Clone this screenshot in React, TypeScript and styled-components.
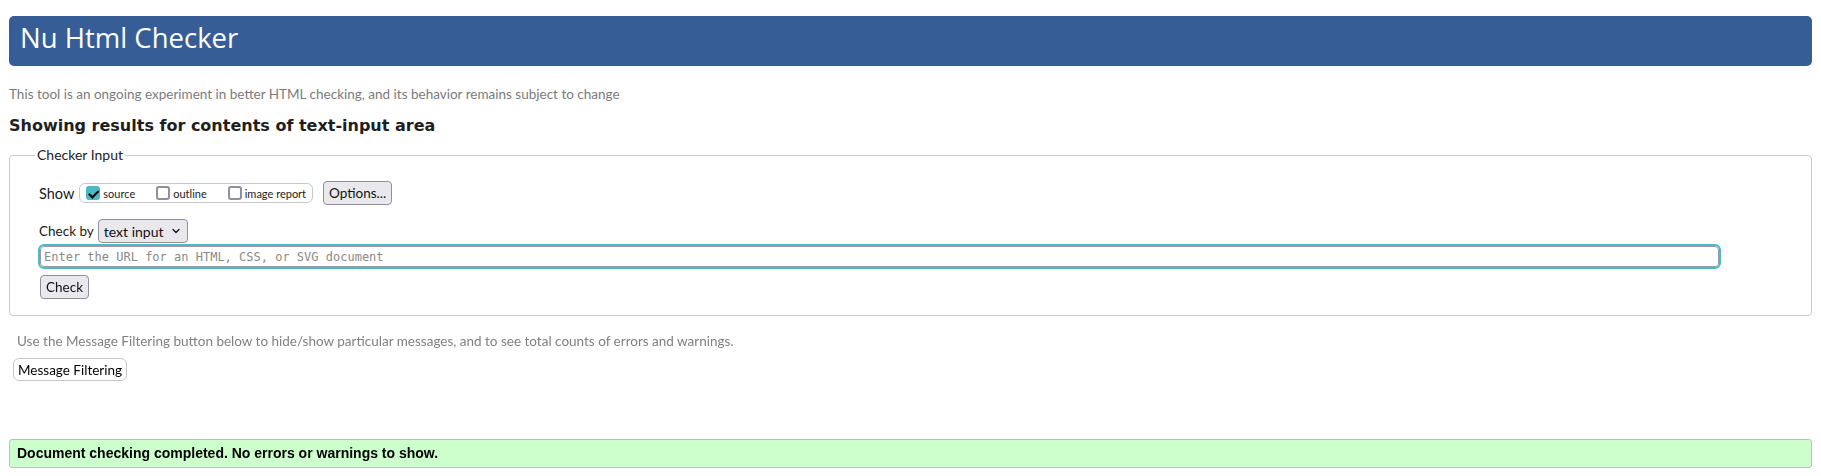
import { ChevronDown } from "lucide-react";
import styled, { createGlobalStyle } from "styled-components";

const GlobalStyle = createGlobalStyle`
  html, body {
    margin: 0;
    padding: 0;
    background: #fff;
  }
  body {
    font-family: Lato, "Open Sans", sans-serif;
    color: #1a1a1a;
  }
`;

export default function App() {
  return (
    <>
      <GlobalStyle />
      <Page>
        <Title>Nu Html Checker</Title>
        <Tagline>
          This tool is an ongoing experiment in better HTML checking, and its
          behavior remains subject to change
        </Tagline>
        <ResultsHeading>Showing results for contents of text-input area</ResultsHeading>

        <Fieldset>
          <Legend>Checker Input</Legend>
          <Row>
            <FieldLabel>Show</FieldLabel>
            <OptionGroup>
              <CheckItem>
                <Checkbox type="checkbox" defaultChecked />
                source
              </CheckItem>
              <CheckItem>
                <Checkbox type="checkbox" />
                outline
              </CheckItem>
              <CheckItem>
                <Checkbox type="checkbox" />
                image report
              </CheckItem>
            </OptionGroup>
            <Button type="button">Options...</Button>
          </Row>

          <Row $gap={4} $top={14}>
            <FieldLabel $size={13.5}>Check by</FieldLabel>
            <SelectWrap>
              <Select defaultValue="text">
                <option value="address">address</option>
                <option value="file">file upload</option>
                <option value="text">text input</option>
              </Select>
              <SelectArrow size={12} strokeWidth={2.6} />
            </SelectWrap>
          </Row>

          <UrlInput
            type="url"
            autoFocus
            placeholder="Enter the URL for an HTML, CSS, or SVG document"
          />

          <Row $top={8}>
            <Button type="submit">Check</Button>
          </Row>
        </Fieldset>

        <Hint>
          Use the Message Filtering button below to hide/show particular
          messages, and to see total counts of errors and warnings.
        </Hint>
        <FilterButton type="button">Message Filtering</FilterButton>

        <SuccessBar>Document checking completed. No errors or warnings to show.</SuccessBar>
      </Page>
    </>
  );
}

const Page = styled.div`
  padding: 16px 9px 8px;
`;

const Title = styled.h1`
  margin: 0;
  height: 50px;
  box-sizing: border-box;
  padding: 0 11px 6px;
  background: #365d95;
  border-radius: 5px;
  color: #fff;
  font-family: "Open Sans", sans-serif;
  font-weight: 400;
  font-size: 27.5px;
  line-height: 44px;
`;

const Tagline = styled.p`
  margin: 19px 0 0;
  font-size: 13.5px;
  line-height: 18px;
  color: #7b7b7b;
`;

const ResultsHeading = styled.h2`
  margin: 13px 0 0;
  font-family: "DejaVu Sans", sans-serif;
  font-weight: 700;
  font-size: 16px;
  line-height: 20px;
  color: #1e1e1e;
`;

const Fieldset = styled.fieldset`
  margin: 9px 0 0;
  padding: 16px 29px 16px 30px;
  border: 1px solid #cbcbcb;
  border-radius: 4px;
  min-width: 0;
`;

const Legend = styled.legend`
  margin-left: -5px;
  padding: 0 2px;
  font-size: 14px;
  line-height: 20px;
  color: #222;
`;

const Row = styled.div<{ $gap?: number; $top?: number }>`
  display: flex;
  align-items: center;
  gap: ${(p) => p.$gap ?? 5}px;
  height: 24px;
  margin-top: ${(p) => p.$top ?? 0}px;
`;

const FieldLabel = styled.span<{ $size?: number }>`
  font-size: ${(p) => p.$size ?? 14.5}px;
  color: #1a1a1a;
  margin-left: -1px;
`;

const OptionGroup = styled.div`
  display: flex;
  align-items: center;
  gap: 21px;
  height: 20px;
  box-sizing: border-box;
  padding: 0 6px;
  margin-right: 5px;
  border: 1px solid #c8c8c8;
  border-radius: 6px;
`;

const CheckItem = styled.label`
  display: flex;
  align-items: center;
  gap: 3px;
  font-size: 11px;
  color: #222;
`;

const Checkbox = styled.input`
  appearance: none;
  position: relative;
  margin: 0;
  width: 14px;
  height: 14px;
  box-sizing: border-box;
  border: 2px solid #8f8f9d;
  border-radius: 3px;
  background: #fff;

  &:checked {
    background: #4bb8c6;
    border-color: #4bb8c6;
  }

  &:checked::after {
    content: "";
    position: absolute;
    left: 2.5px;
    top: -0.5px;
    width: 3.5px;
    height: 7.5px;
    border: solid #000;
    border-width: 0 2.4px 2.4px 0;
    transform: rotate(45deg);
  }
`;

const Button = styled.button`
  height: 24px;
  box-sizing: border-box;
  padding: 0 5px;
  background: #e9e9ed;
  border: 1px solid #8f8f9d;
  border-radius: 4px;
  font-family: Lato, sans-serif;
  font-size: 13.5px;
  color: #111;
`;

const SelectWrap = styled.div`
  position: relative;
  display: flex;
`;

const Select = styled.select`
  appearance: none;
  width: 90px;
  height: 24px;
  box-sizing: border-box;
  padding: 0 20px 0 5px;
  background: #e9e9ed;
  border: 1px solid #8f8f9d;
  border-radius: 4px;
  font-family: Lato, sans-serif;
  font-size: 14px;
  color: #111;
`;

const SelectArrow = styled(ChevronDown)`
  position: absolute;
  right: 6px;
  top: 6px;
  color: #111;
  pointer-events: none;
`;

const UrlInput = styled.input`
  display: block;
  width: calc(100% - 63px);
  height: 21px;
  box-sizing: border-box;
  margin: 3px 0 0;
  padding: 0 3px;
  border: 1px solid #9a9aa6;
  border-radius: 4px;
  outline: 2px solid #4db8c7;
  outline-offset: 0;
  font-family: "DejaVu Sans Mono", monospace;
  font-size: 12px;
  color: #111;
  caret-color: #000;

  &::placeholder {
    color: #8a8a8a;
  }
  &:focus {
    outline: 2px solid #4db8c7;
  }
`;

const Hint = styled.p`
  margin: 16px 0 0 8px;
  font-size: 13.5px;
  line-height: 18px;
  color: #808080;
`;

const FilterButton = styled.button`
  display: block;
  margin: 8px 0 0 4px;
  height: 23px;
  box-sizing: border-box;
  padding: 0 4px;
  background: #fff;
  border: 1px solid #c6c6c6;
  border-radius: 6px;
  font-family: Lato, sans-serif;
  font-size: 13.5px;
  color: #000;
`;

const SuccessBar = styled.div`
  margin-top: 58px;
  height: 29px;
  box-sizing: border-box;
  padding: 0 7px;
  background: #ccffcc;
  border: 1px solid #bdbdbd;
  border-radius: 3px;
  font-family: "Liberation Sans", Arial, sans-serif;
  font-weight: 700;
  font-size: 14px;
  line-height: 27px;
  color: #000;
`;
